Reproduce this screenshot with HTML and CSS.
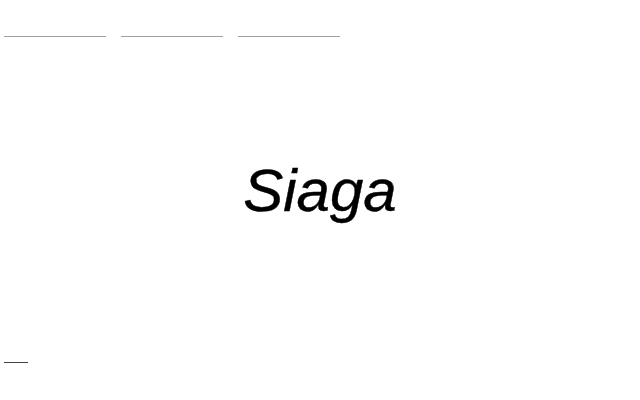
FILE: index.html
```html
<!DOCTYPE html>
<html>
<head>
<meta charset="utf-8">
<link rel="stylesheet" href="styles.css">
</head>
<body>
<div class="page">
  <nav class="nav">
    <span class="nav-line"></span>
    <span class="nav-line"></span>
    <span class="nav-line"></span>
  </nav>
  <main class="hero">
    <h1 class="title">Siaga</h1>
  </main>
  <footer class="foot">
    <span class="foot-line"></span>
  </footer>
</div>
</body>
</html>
```
FILE: styles.css
```css
html, body {
  margin: 0;
  padding: 0;
  background: #fff;
}
.page {
  width: 640px;
  height: 400px;
  display: flex;
  flex-direction: column;
  font-family: "Liberation Sans", Arial, sans-serif;
}
.nav {
  display: flex;
  gap: 15px;
  padding: 36px 0 0 4px;
}
.nav-line {
  display: block;
  width: 102px;
  height: 1px;
  background: #a0a0a0;
}
.hero {
  flex: 1;
  display: flex;
  align-items: center;
  justify-content: center;
  padding-bottom: 17px;
}
.title {
  margin: 0;
  font-size: 60px;
  font-weight: 400;
  font-style: italic;
  color: #000;
  line-height: 1;
  -webkit-text-stroke: 0.4px #000;
}
.foot {
  padding: 0 0 37px 4px;
}
.foot-line {
  display: block;
  width: 24px;
  height: 1px;
  background: #444;
}
```
